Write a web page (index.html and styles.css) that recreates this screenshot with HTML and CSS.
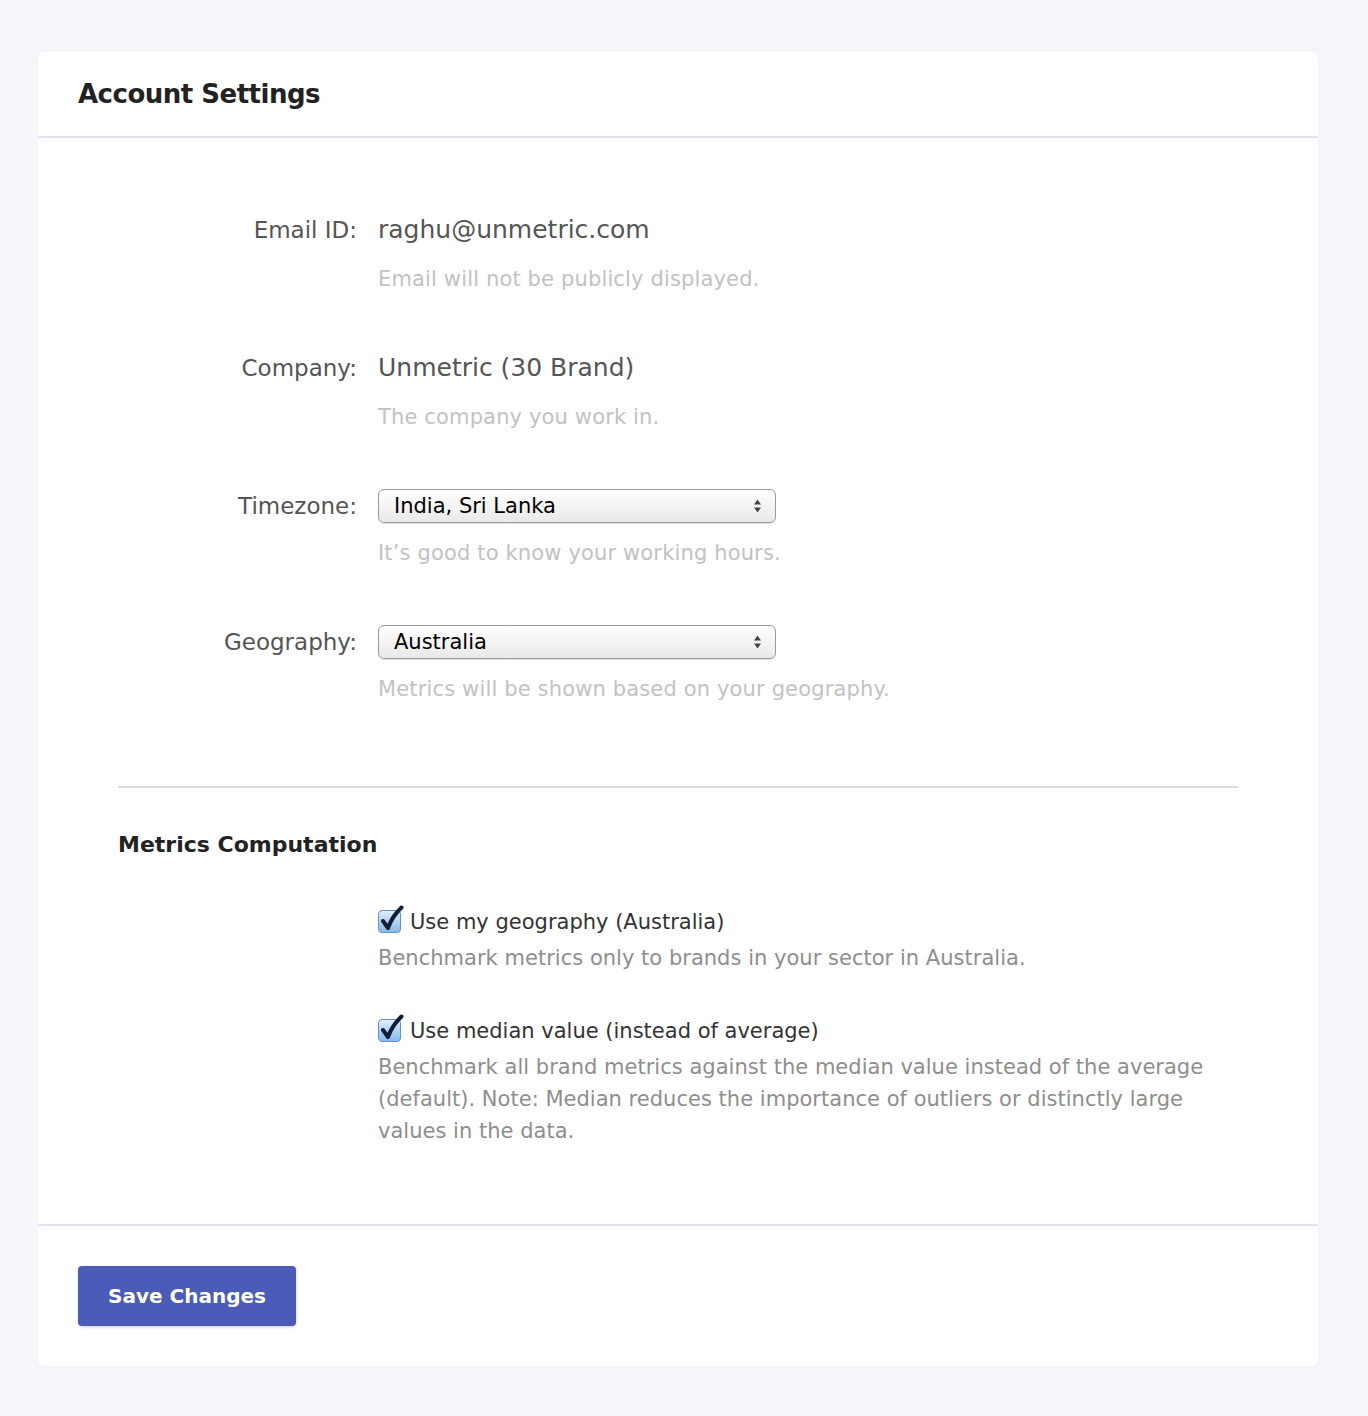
FILE: index.html
```html
<!DOCTYPE html>
<html>
<head>
<meta charset="utf-8">
<link rel="stylesheet" href="styles.css">
</head>
<body>
<div class="page">
  <div class="card">
    <div class="card-header">
      <h1 class="title">Account Settings</h1>
    </div>
    <div class="card-body">
      <div class="form-row">
        <div class="label">Email ID:</div>
        <div class="field">
          <div class="value">raghu@unmetric.com</div>
          <div class="hint">Email will not be publicly displayed.</div>
        </div>
      </div>
      <div class="form-row">
        <div class="label">Company:</div>
        <div class="field">
          <div class="value">Unmetric (30 Brand)</div>
          <div class="hint">The company you work in.</div>
        </div>
      </div>
      <div class="form-row">
        <div class="label">Timezone:</div>
        <div class="field">
          <div class="select"><span>India, Sri Lanka</span>
            <svg class="arrows" width="9" height="16" viewBox="0 0 9 16"><path d="M4.5 1.5 L8 6.5 L1 6.5 Z M4.5 14.5 L8 9.5 L1 9.5 Z" fill="#444"/></svg>
          </div>
          <div class="hint">It’s good to know your working hours.</div>
        </div>
      </div>
      <div class="form-row">
        <div class="label">Geography:</div>
        <div class="field">
          <div class="select"><span>Australia</span>
            <svg class="arrows" width="9" height="16" viewBox="0 0 9 16"><path d="M4.5 1.5 L8 6.5 L1 6.5 Z M4.5 14.5 L8 9.5 L1 9.5 Z" fill="#444"/></svg>
          </div>
          <div class="hint">Metrics will be shown based on your geography.</div>
        </div>
      </div>

      <hr class="divider">

      <h2 class="subtitle">Metrics Computation</h2>

      <div class="options">
        <div class="option">
          <div class="check-line">
            <svg class="checkbox" width="26" height="29" viewBox="0 0 26 29">
              <defs>
                <linearGradient id="cbg" x1="0" y1="0" x2="0" y2="1">
                  <stop offset="0" stop-color="#e4effc"/>
                  <stop offset="0.5" stop-color="#b2d3f5"/>
                  <stop offset="1" stop-color="#86b9ec"/>
                </linearGradient>
              </defs>
              <rect x="0.5" y="5.5" width="22" height="22" rx="3.5" fill="url(#cbg)" stroke="#6a8fbf" stroke-width="1"/>
              <path d="M5 16 L10 23 Q14 11.5 23.5 2.5" fill="none" stroke="#0f1e36" stroke-width="4" stroke-linecap="round" stroke-linejoin="round"/>
            </svg>
            <span class="check-label">Use my geography (Australia)</span>
          </div>
          <div class="desc">Benchmark metrics only to brands in your sector in Australia.</div>
        </div>
        <div class="option">
          <div class="check-line">
            <svg class="checkbox" width="26" height="29" viewBox="0 0 26 29">
              <defs>
                <linearGradient id="cbg2" x1="0" y1="0" x2="0" y2="1">
                  <stop offset="0" stop-color="#e4effc"/>
                  <stop offset="0.5" stop-color="#b2d3f5"/>
                  <stop offset="1" stop-color="#86b9ec"/>
                </linearGradient>
              </defs>
              <rect x="0.5" y="5.5" width="22" height="22" rx="3.5" fill="url(#cbg2)" stroke="#6a8fbf" stroke-width="1"/>
              <path d="M5 16 L10 23 Q14 11.5 23.5 2.5" fill="none" stroke="#0f1e36" stroke-width="4" stroke-linecap="round" stroke-linejoin="round"/>
            </svg>
            <span class="check-label">Use median value (instead of average)</span>
          </div>
          <div class="desc">Benchmark all brand metrics against the median value instead of the average (default). Note: Median reduces the importance of outliers or distinctly large values in the data.</div>
        </div>
      </div>
    </div>
    <div class="card-footer">
      <button class="btn">Save Changes</button>
    </div>
  </div>
</div>
</body>
</html>
```

FILE: styles.css
```css
* { box-sizing: border-box; }
html, body {
  margin: 0;
  padding: 0;
  background: #f5f6fa;
  font-family: "DejaVu Sans", "Liberation Sans", sans-serif;
}
.page {
  padding: 52px 50px 50px 38px;
}
.card {
  width: 1280px;
  background: #fff;
  border-radius: 6px;
  box-shadow: 0 1px 2px rgba(0,0,0,0.03);
}
.card-header {
  height: 86px;
  padding: 0 40px;
  display: flex;
  align-items: center;
  border-bottom: 2px solid #e1e2f2;
}
.title {
  margin: 0;
  font-size: 26px;
  letter-spacing: -0.5px;
  font-weight: bold;
  color: #222;
}
.card-body {
  padding: 75px 80px 77px 80px;
}
.form-row {
  display: grid;
  grid-template-columns: 239px 1fr;
  column-gap: 21px;
  margin-bottom: 58px;
}
.form-row:last-of-type { margin-bottom: 0; }
.label {
  text-align: right;
  font-size: 23px;
  line-height: 34px;
  color: #555;
}
.value {
  font-size: 25px;
  line-height: 34px;
  color: #555;
}
.hint {
  margin-top: 18px;
  font-size: 21px;
  letter-spacing: 0.15px;
  line-height: 28px;
  color: #c2c2c2;
}
.select + .hint {
  margin-top: 16px;
}
.select {
  width: 398px;
  height: 34px;
  border: 1px solid #9a9a9a;
  border-radius: 6px;
  background: linear-gradient(#ffffff, #f4f4f4 50%, #e9e9e9);
  box-shadow: 0 1px 1px rgba(0,0,0,0.12);
  display: flex;
  align-items: center;
  justify-content: space-between;
  padding: 0 13px 0 15px;
  font-size: 21px;
  color: #000;
}
.divider {
  border: 0;
  border-top: 2px solid #dcdcdc;
  margin: 83px 0 0 0;
}
.subtitle {
  margin: 42px 0 0 0;
  font-size: 22px;
  line-height: 30px;
  font-weight: bold;
  color: #222;
}
.options {
  padding-left: 260px;
  margin-top: 46px;
}
.option + .option {
  margin-top: 41px;
}
.check-line {
  display: flex;
  align-items: center;
  height: 32px;
  gap: 6px;
}
.checkbox {
  margin-top: -6px;
  flex: none;
}
.check-label {
  font-size: 21px;
  color: #333;
}
.desc {
  margin-top: 4px;
  font-size: 21px;
  letter-spacing: 0.02px;
  line-height: 32px;
  color: #8e8e8e;
  max-width: 840px;
}
.card-footer {
  border-top: 2px solid #e1e2f2;
  padding: 40px;
}
.btn {
  width: 218px;
  height: 60px;
  border: 0;
  border-radius: 4px;
  background: #4b5bb7;
  color: #fff;
  font-family: "DejaVu Sans", sans-serif;
  font-weight: bold;
  font-size: 20px;
  box-shadow: 0 1px 3px rgba(0,0,0,0.2);
}
```
